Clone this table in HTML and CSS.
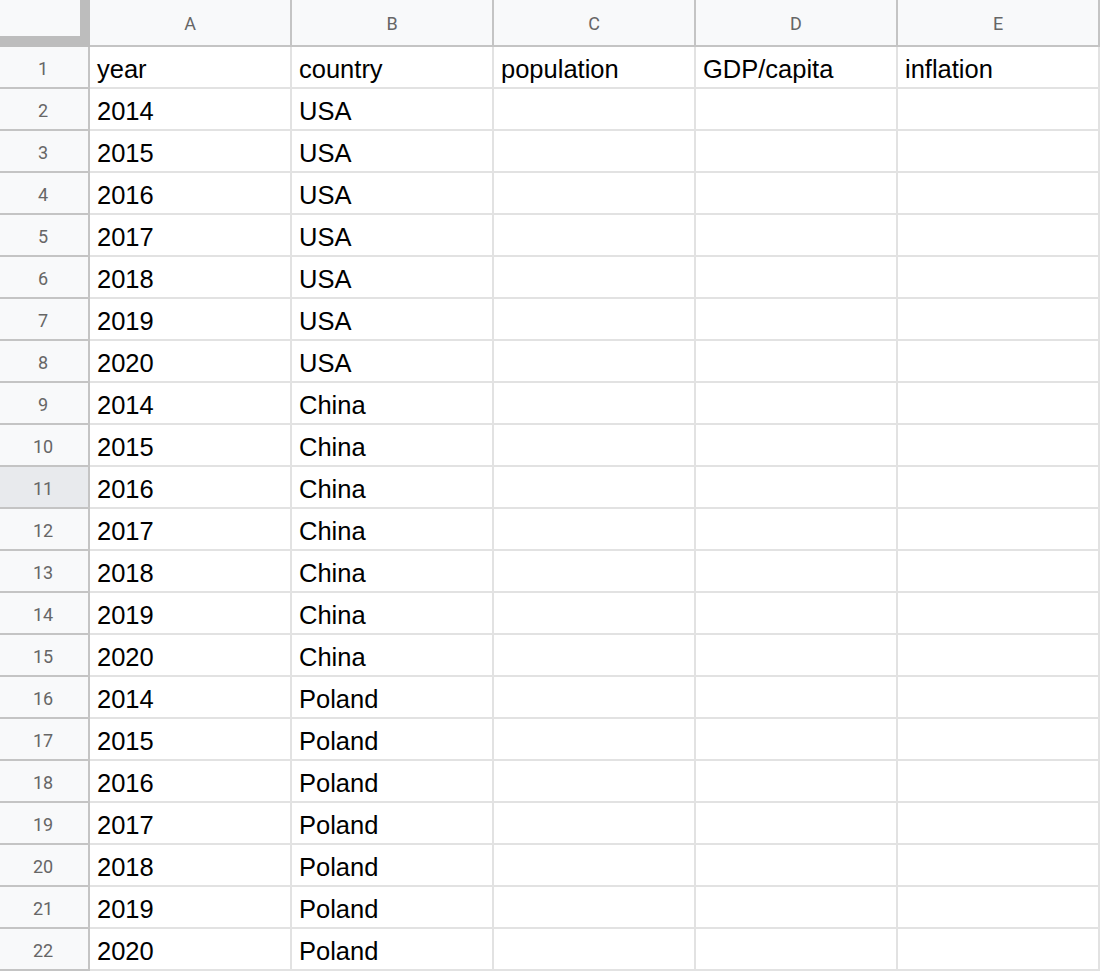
FILE: index.html
```html
<!DOCTYPE html>
<html>
<head>
<meta charset="utf-8">
<link rel="stylesheet" href="styles.css">
</head>
<body>
<div class="sheet">
  <div class="corner"></div>
  <div class="colhead">A</div>
  <div class="colhead">B</div>
  <div class="colhead">C</div>
  <div class="colhead">D</div>
  <div class="colhead">E</div>

  <div class="rowhead">1</div><div class="cell">year</div><div class="cell">country</div><div class="cell">population</div><div class="cell">GDP/capita</div><div class="cell">inflation</div>
  <div class="rowhead">2</div><div class="cell">2014</div><div class="cell">USA</div><div class="cell"></div><div class="cell"></div><div class="cell"></div>
  <div class="rowhead">3</div><div class="cell">2015</div><div class="cell">USA</div><div class="cell"></div><div class="cell"></div><div class="cell"></div>
  <div class="rowhead">4</div><div class="cell">2016</div><div class="cell">USA</div><div class="cell"></div><div class="cell"></div><div class="cell"></div>
  <div class="rowhead">5</div><div class="cell">2017</div><div class="cell">USA</div><div class="cell"></div><div class="cell"></div><div class="cell"></div>
  <div class="rowhead">6</div><div class="cell">2018</div><div class="cell">USA</div><div class="cell"></div><div class="cell"></div><div class="cell"></div>
  <div class="rowhead">7</div><div class="cell">2019</div><div class="cell">USA</div><div class="cell"></div><div class="cell"></div><div class="cell"></div>
  <div class="rowhead">8</div><div class="cell">2020</div><div class="cell">USA</div><div class="cell"></div><div class="cell"></div><div class="cell"></div>
  <div class="rowhead">9</div><div class="cell">2014</div><div class="cell">China</div><div class="cell"></div><div class="cell"></div><div class="cell"></div>
  <div class="rowhead">10</div><div class="cell">2015</div><div class="cell">China</div><div class="cell"></div><div class="cell"></div><div class="cell"></div>
  <div class="rowhead active">11</div><div class="cell">2016</div><div class="cell">China</div><div class="cell"></div><div class="cell"></div><div class="cell"></div>
  <div class="rowhead">12</div><div class="cell">2017</div><div class="cell">China</div><div class="cell"></div><div class="cell"></div><div class="cell"></div>
  <div class="rowhead">13</div><div class="cell">2018</div><div class="cell">China</div><div class="cell"></div><div class="cell"></div><div class="cell"></div>
  <div class="rowhead">14</div><div class="cell">2019</div><div class="cell">China</div><div class="cell"></div><div class="cell"></div><div class="cell"></div>
  <div class="rowhead">15</div><div class="cell">2020</div><div class="cell">China</div><div class="cell"></div><div class="cell"></div><div class="cell"></div>
  <div class="rowhead">16</div><div class="cell">2014</div><div class="cell">Poland</div><div class="cell"></div><div class="cell"></div><div class="cell"></div>
  <div class="rowhead">17</div><div class="cell">2015</div><div class="cell">Poland</div><div class="cell"></div><div class="cell"></div><div class="cell"></div>
  <div class="rowhead">18</div><div class="cell">2016</div><div class="cell">Poland</div><div class="cell"></div><div class="cell"></div><div class="cell"></div>
  <div class="rowhead">19</div><div class="cell">2017</div><div class="cell">Poland</div><div class="cell"></div><div class="cell"></div><div class="cell"></div>
  <div class="rowhead">20</div><div class="cell">2018</div><div class="cell">Poland</div><div class="cell"></div><div class="cell"></div><div class="cell"></div>
  <div class="rowhead">21</div><div class="cell">2019</div><div class="cell">Poland</div><div class="cell"></div><div class="cell"></div><div class="cell"></div>
  <div class="rowhead">22</div><div class="cell">2020</div><div class="cell">Poland</div><div class="cell"></div><div class="cell"></div><div class="cell"></div>
</div>
</body>
</html>
```
FILE: styles.css
```css
html, body {
  margin: 0;
  padding: 0;
  background: #ffffff;
}

.sheet {
  display: grid;
  grid-template-columns: 90px repeat(5, 202px);
  grid-template-rows: 47px repeat(22, 42px);
  width: 1100px;
  font-family: "Liberation Sans", Arial, sans-serif;
}

.sheet > div {
  box-sizing: border-box;
}

.corner {
  background: #f8f9fa;
  box-shadow: inset -10px 0 0 #bdbdbd, inset 0 -11px 0 #bdbdbd;
}

.colhead {
  background: #f8f9fa;
  border-right: 2px solid #c4c4c4;
  border-bottom: 2px solid #c4c4c4;
  color: #666666;
  font-family: Roboto, "Liberation Sans", Arial, sans-serif;
  font-size: 18px;
  display: flex;
  align-items: center;
  justify-content: center;
  padding-top: 1px;
}

.rowhead {
  background: #f8f9fa;
  border-right: 2px solid #c4c4c4;
  border-bottom: 2px solid #c4c4c4;
  color: #666666;
  font-family: Roboto, "Liberation Sans", Arial, sans-serif;
  font-size: 18px;
  display: flex;
  align-items: center;
  justify-content: center;
  padding: 3px 2px 0 0;
}

.rowhead.active {
  background: #e8eaed;
}

.cell {
  border-right: 2px solid #e2e2e2;
  border-bottom: 2px solid #e2e2e2;
  color: #000000;
  font-size: 25.5px;
  line-height: 40px;
  padding: 2px 0 0 7px;
  white-space: nowrap;
  overflow: hidden;
}
```
